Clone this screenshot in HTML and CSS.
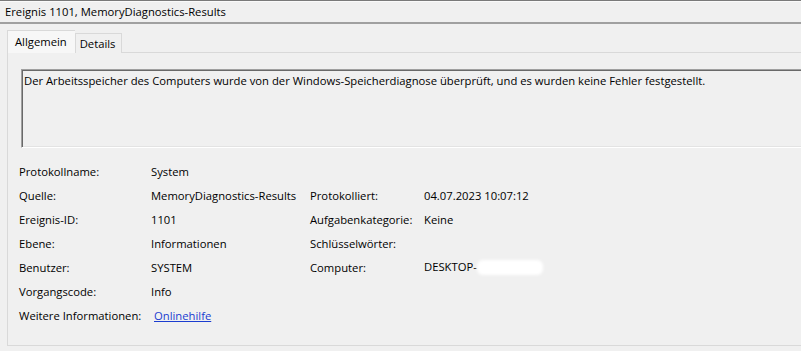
FILE: index.html
```html
<!DOCTYPE html>
<html lang="de">
<head>
    <meta charset="UTF-8">
    <title>Ereignis 1101</title>
    <link rel="stylesheet" href="styles.css">
</head>
<body>
    <div class="title-bar">Ereignis 1101, MemoryDiagnostics-Results</div>

    <div class="tabs">
        <div class="tab active">Allgemein</div>
        <div class="tab">Details</div>
    </div>

    <div class="panel">
        <div class="message">Der Arbeitsspeicher des Computers wurde von der Windows-Speicherdiagnose überprüft, und es wurden keine Fehler festgestellt.</div>

        <div class="props">
            <span>Protokollname:</span><span>System</span><span></span><span></span>
            <span>Quelle:</span><span>MemoryDiagnostics-Results</span><span>Protokolliert:</span><span>04.07.2023 10:07:12</span>
            <span>Ereignis-ID:</span><span>1101</span><span>Aufgabenkategorie:</span><span>Keine</span>
            <span>Ebene:</span><span>Informationen</span><span>Schlüsselwörter:</span><span></span>
            <span>Benutzer:</span><span>SYSTEM</span><span>Computer:</span><span>DESKTOP-<span class="redacted"></span></span>
            <span>Vorgangscode:</span><span>Info</span><span></span><span></span>
            <span>Weitere Informationen:</span><span><a href="#" class="link">Onlinehilfe</a></span><span></span><span></span>
        </div>
    </div>
</body>
</html>
```

FILE: styles.css
```css
html, body {
    margin: 0;
    padding: 0;
    overflow: hidden;
}

body {
    background-color: #F0F0F0;
    color: #000;
    font-family: "Open Sans", "Noto Sans", sans-serif;
    font-size: 11.25px;
    width: 801px;
    height: 351px;
    border-top: 1px solid #7A7A7A;
    box-sizing: border-box;
}

.title-bar {
    height: 23px;
    line-height: 19px;
    padding-left: 5px;
    border-top: 1px solid #FAFAFA;
    border-bottom: 2px solid #A0A0A0;
    box-sizing: border-box;
}

.tabs {
    display: flex;
    align-items: flex-end;
    margin: 6px 0 0 7px;
    height: 23px;
    position: relative;
    z-index: 1;
}

.tab {
    height: 20px;
    line-height: 19px;
    padding: 0 5px 0 4px;
    border: 1px solid #D9D9D9;
    border-bottom: none;
    box-sizing: border-box;
    background-color: #F0F0F0;
}

.tab.active {
    height: 23px;
    line-height: 21px;
    padding: 0 8px 0 7px;
    background-color: #F7F7F7;
    border-right: none;
}

.panel {
    margin: -1px 0 0 7px;
    width: 830px;
    height: 294px;
    border: 1px solid #D9D9D9;
    box-sizing: border-box;
    padding: 16px 0 0 13px;
}

.message {
    height: 79px;
    padding: 3px 0 0 2px;
    box-sizing: border-box;
    border-top: 1px solid #A0A0A0;
    border-left: 1px solid #A0A0A0;
    border-bottom: 1px solid #FFFFFF;
    box-shadow: inset 1px 1px 0 #696969, inset 0 -1px 0 #E3E3E3;
    line-height: 16px;
}

.props {
    display: grid;
    grid-template-columns: 132px 159px 114px 1fr;
    grid-auto-rows: 24px;
    align-items: center;
    margin: 11px 0 0 -2px;
}

.link {
    color: #1B3DD0;
    margin-left: 3px;
}

.redacted {
    display: inline-block;
    width: 66px;
    height: 15px;
    vertical-align: middle;
    background-color: #FFFFFF;
    border-radius: 6px;
    filter: blur(1.5px);
}
```
